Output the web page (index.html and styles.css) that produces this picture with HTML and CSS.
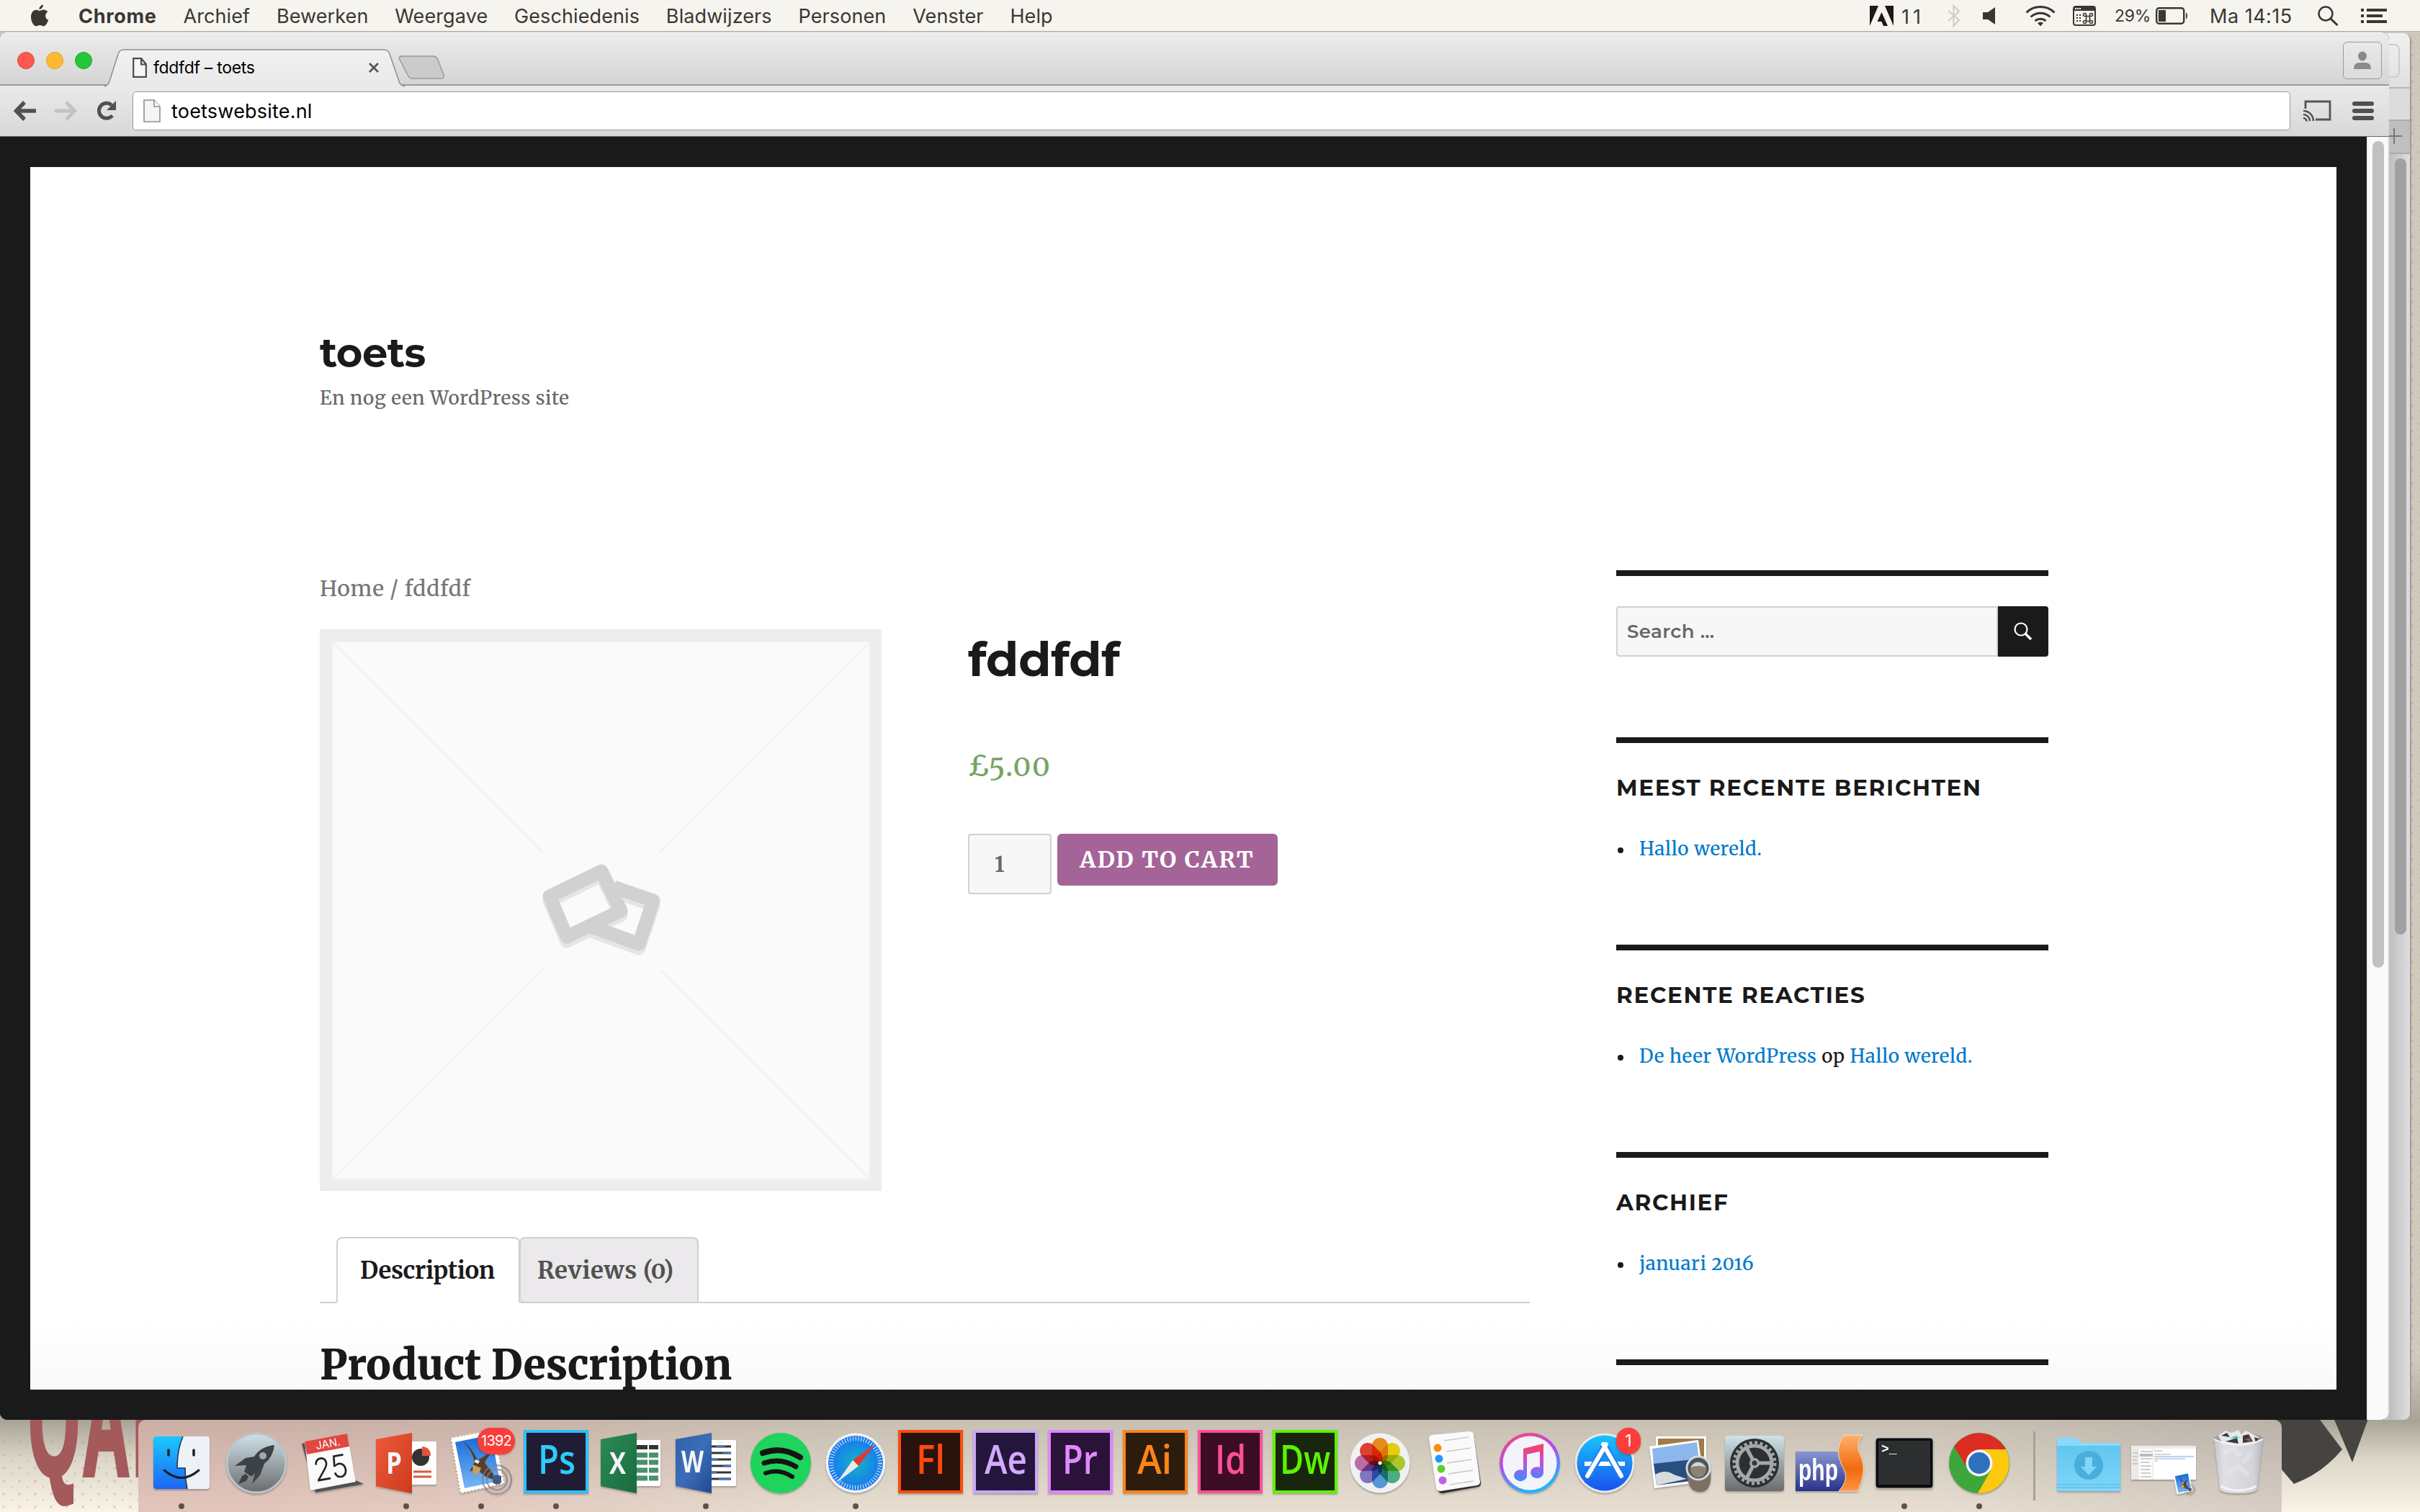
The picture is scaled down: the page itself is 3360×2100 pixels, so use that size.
FILE: index.html
```html
<!DOCTYPE html>
<html lang="nl">
<head>
<meta charset="utf-8">
<title>fddfdf – toets</title>
<link rel="stylesheet" href="styles.css">
</head>
<body>
<svg class="wallpaper" viewBox="0 0 3360 2100" aria-hidden="true">
  <defs>
    <linearGradient id="paper" x1="0" y1="0" x2="0" y2="1"><stop offset="0" stop-color="#cdc8bb"/><stop offset=".9" stop-color="#d0cabc"/><stop offset=".94" stop-color="#a9a498"/><stop offset=".965" stop-color="#dcd6c8"/><stop offset="1" stop-color="#fbf4e6"/></linearGradient>
    <pattern id="grain" width="22" height="18" patternUnits="userSpaceOnUse"><circle cx="5" cy="5" r="2" fill="#a89f8c" opacity=".35"/><circle cx="16" cy="13" r="1.600" fill="#a89f8c" opacity=".3"/></pattern>
  </defs>
  <rect width="3360" height="2100" fill="url(#paper)"/>
  <rect width="200" height="2100" fill="url(#grain)"/>
  <rect x="3340" width="20" height="1980" fill="url(#grain)"/>
  <text class="poster" transform="translate(40 2048) scale(.44 1)" textLength="385">QAI</text>
  <path d="M3100 1960H3212L3252 2013Q3225 2046 3185 2061L3150 2020Z" fill="#464440"/>
  <path d="M3236 1960H3292L3266 2031Z" fill="#464440"/>
</svg>

<header class="menubar">
  <svg class="apple" viewBox="0 0 26 32"><path d="M18 .5c.2 3-2.6 6.600-5.500 6.500C12.200 4 15 .8 18 .5zM13 9c1.300 0 3-1.600 5.800-1.500 2.200.1 4.200 1.200 5.400 3-4.600 3-3.700 9.400 1 11.300-1 3-3.700 8.500-6.700 8.600-2 0-2.800-1.300-5.200-1.300s-3.300 1.300-5.200 1.300C4.300 30.300 1 23.500 1 17.600 1 11.500 4.600 7.800 8 7.800c2.200 0 3.800 1.200 5 1.200z" fill="#3a3733"/></svg>
  <nav class="menus">
    <b>Chrome</b><span>Archief</span><span>Bewerken</span><span>Weergave</span><span>Geschiedenis</span><span>Bladwijzers</span><span>Personen</span><span>Venster</span><span>Help</span>
  </nav>
  <div class="status">
    <svg class="s-adobe" viewBox="0 0 33 28"><path d="M0 0h12L0 28zM21 0h12v28zM16.500 9l8.500 19h-6l-2.500-6h-6z" fill="#1c1a17"/></svg>
    <span class="s-eleven">11</span>
    <svg class="s-bt" viewBox="0 0 20 32"><path d="M2 9l15 13-7.500 8V2L17 10 2 23" fill="none" stroke="#cfccc6" stroke-width="2"/></svg>
    <svg class="s-vol" viewBox="0 0 18 24"><path d="M0 7h7l10-7v24L7 17H0z" fill="#3a3733"/></svg>
    <svg class="s-wifi" viewBox="0 0 42 30"><g fill="none" stroke="#3a3733" stroke-width="3"><path d="M1.500 10.500a28 28 0 0 1 39 0"/><path d="M7.500 16.500a20 20 0 0 1 27 0"/><path d="M13.500 22a12 12 0 0 1 15 0"/></g><path d="M17 25q4-3 8 0l-4 4.500z" fill="#3a3733"/></svg>
    <svg class="s-cal" viewBox="0 0 32 28"><rect x="1" y="1" width="30" height="26" rx="3" fill="none" stroke="#3a3733" stroke-width="2"/><path d="M1 2h30v5H1z" fill="#3a3733"/><path d="M3 4h8" stroke="#fff" stroke-width="2" stroke-dasharray="2 1"/><path d="M5 13h7M5 17h7M5 21h7" stroke="#3a3733" stroke-width="2" stroke-dasharray="2"/><path d="M18.500 14.500v7h5v-7zM18.500 14.500h-2a2 2 0 1 1 2-2zM23.500 14.500h2a2 2 0 1 0-2-2zM18.500 21.500v1a2 2 0 1 1-2-2h2M23.500 21.500v1a2 2 0 1 0 2-2h-2" fill="none" stroke="#3a3733" stroke-width="1.600"/></svg>
    <span class="s-pct">29%</span>
    <svg class="s-bat" viewBox="0 0 46 24"><rect x="1.200" y="1.200" width="38" height="21.600" rx="3.500" fill="none" stroke="#3a3733" stroke-width="2.400"/><rect x="4" y="4" width="10" height="16" fill="#3a3733"/><path d="M42 7q4 5 0 10z" fill="#3a3733"/></svg>
    <span class="s-time">Ma 14:15</span>
    <svg class="s-find" viewBox="0 0 30 28"><circle cx="11" cy="11" r="9.500" fill="none" stroke="#3a3733" stroke-width="2.500"/><path d="M18 18l9.500 9" stroke="#3a3733" stroke-width="3"/></svg>
    <svg class="s-list" viewBox="0 0 36 20"><path d="M0 2h4M8 2h28M0 10h4M8 10h22M0 18h4M8 18h28" stroke="#3a3733" stroke-width="4"/></svg>
  </div>
</header>

<section class="back-window" aria-hidden="true">
  <div class="bw-title"><i></i></div>
  <div class="bw-bar"></div>
  <div class="bw-tabs"><svg viewBox="0 0 22 22"><path d="M11 0v22M0 11h22" stroke="#777" stroke-width="2"/></svg></div>
  <div class="bw-scroll"><i></i></div>
</section>

<main class="window">
  <div class="tabstrip">
    <div class="lights"><i class="red"></i><i class="amber"></i><i class="green"></i></div>
    <div class="tab">
      <svg class="tab-shape" viewBox="0 0 424 54"><defs><linearGradient id="tg" x1="0" y1="0" x2="0" y2="1"><stop offset="0" stop-color="#f1f1f1"/><stop offset="1" stop-color="#e9e9e9"/></linearGradient></defs><path d="M0 52q5-1 7-7L19 7q2-6 8-6h361q6 0 8 6l13 38q2 6 8 7v2H0z" fill="url(#tg)"/><path d="M0 52q5-1 7-7L19 7q2-6 8-6h361q6 0 8 6l13 38q2 6 8 7" fill="none" stroke="#8f8f8f" stroke-width="1.500"/></svg>
      <svg class="doc" viewBox="0 0 20 28"><path d="M1.200 1.200h11l6.600 8v17.600H1.200zM12 1.500v8h7" fill="#f5f5f5" stroke="#4c4c4c" stroke-width="2.200"/></svg>
      <span class="tab-title">fddfdf – toets</span>
      <svg class="close" viewBox="0 0 14 14"><path d="M1 1l12 12M13 1L1 13" stroke="#555" stroke-width="2.600"/></svg>
    </div>
    <svg class="newtab" viewBox="0 0 64 33"><path d="M5 1h43q5 0 7 5l8 21q1 5-4 5H20q-5 0-7-5L2 6Q0 1 5 1z" fill="#cbcbcc" stroke="#999" stroke-width="1.500"/></svg>
    <div class="profile"><svg viewBox="0 0 24 26"><ellipse cx="12" cy="7" rx="6" ry="6.500" fill="#8a8a8a"/><path d="M0 25q0-9 8-9h8q8 0 8 9z" fill="#8a8a8a"/></svg></div>
  </div>
  <div class="toolbar">
    <svg class="nav back" viewBox="0 0 32 28"><path d="M15 2L3.500 14 15 26M4 14h27" fill="none" stroke="#505050" stroke-width="5.500"/></svg>
    <svg class="nav fwd" viewBox="0 0 32 28"><path d="M17 2l11.500 12L17 26M28 14H1" fill="none" stroke="#c2c2c2" stroke-width="5"/></svg>
    <svg class="nav reload" viewBox="0 0 28 28"><path d="M22 20.500A10.500 10.500 0 1 1 21 6" fill="none" stroke="#505050" stroke-width="5"/><path d="M27 0v13H14z" fill="#505050"/></svg>
    <div class="omnibox">
      <svg viewBox="0 0 24 32"><path d="M1 1h14l8 9v21H1z" fill="#f5f5f5" stroke="#8e8e8e" stroke-width="1.600"/><path d="M15 1v9h8" fill="#fff" stroke="#8e8e8e" stroke-width="1.600"/></svg>
      <span class="url">toetswebsite.nl</span>
    </div>
    <svg class="cast" viewBox="0 0 40 30"><path d="M4 12V2h34v25H18" fill="none" stroke="#555" stroke-width="2.800"/><path d="M1 15a14 14 0 0 1 14 14M1 20a9 9 0 0 1 9 9M1 25a4.500 4.500 0 0 1 4.500 4.500" fill="none" stroke="#555" stroke-width="2.600"/></svg>
    <div class="burger"><i></i><i></i><i></i></div>
  </div>
  <div class="viewport">
    <div class="site">
      <h1 class="site-title">toets</h1>
      <p class="tagline">En nog een WordPress site</p>
      <div class="columns">
        <div class="primary">
          <p class="crumbs">Home / fddfdf</p>
          <div class="product">
            <svg class="placeholder" viewBox="0 0 780 780"><rect width="780" height="780" fill="#ededed"/><rect x="17.500" y="17.500" width="746" height="746" fill="#fafafa" stroke="#f3f3f3" stroke-width="1.500"/><path d="M18 18L310 310M763 18L472 310M18 763L310 472M763 763L474 474" stroke="#f1f1f1" stroke-width="2"/>
              <g fill="none" stroke-linejoin="round" stroke-width="19"><path d="M408 358l55 19-20 60-66-24M391 336l-72 35 24 56 75-36z" transform="translate(0 6)" stroke="#e5e5e5"/><path d="M408 358l55 19-20 60-66-24" stroke="#d1d1d1"/><path d="M391 336l-72 35 24 56 75-36z" stroke="#d1d1d1"/></g></svg>
            <div class="summary">
              <h2 class="product-title">fddfdf</h2>
              <p class="price">£5.00</p>
              <div class="cart"><div class="qty">1</div><div class="add">ADD TO CART</div></div>
            </div>
          </div>
          <div class="tabs"><div class="t active">Description</div><div class="t">Reviews (0)</div></div>
          <h2 class="desc">Product Description</h2>
        </div>
        <aside class="sidebar">
          <section class="widget first"><div class="search"><div class="field">Search …</div><div class="go"><svg viewBox="0 0 26 26"><circle cx="10" cy="10" r="8.500" fill="none" stroke="#fff" stroke-width="2.200"/><path d="M16 16l8 8" stroke="#fff" stroke-width="3.500"/></svg></div></div></section>
          <section class="widget"><h3>MEEST RECENTE BERICHTEN</h3><p class="li"><a>Hallo wereld.</a></p></section>
          <section class="widget"><h3>RECENTE REACTIES</h3><p class="li"><a>De heer WordPress</a> op <a>Hallo wereld.</a></p></section>
          <section class="widget"><h3>ARCHIEF</h3><p class="li"><a>januari 2016</a></p></section>
          <section class="widget"></section>
        </aside>
      </div>
    </div>
    <div class="scrollbar"><i></i></div>
  </div>
</main>

<footer class="dock">
  <svg class="defs" width="0" height="0"><defs>
    <linearGradient id="gFinder" x1="0" y1="0" x2="0" y2="1"><stop offset="0" stop-color="#1bc8ff"/><stop offset="1" stop-color="#1b66f2"/></linearGradient>
    <linearGradient id="gSilver" x1="0" y1="0" x2="0" y2="1"><stop offset="0" stop-color="#cfe2ea"/><stop offset="1" stop-color="#6b6b6b"/></linearGradient>
    <linearGradient id="gSky" x1="0" y1="0" x2="0" y2="1"><stop offset="0" stop-color="#1668d8"/><stop offset="1" stop-color="#78b8f6"/></linearGradient>
    <linearGradient id="gBlue" x1="0" y1="0" x2="0" y2="1"><stop offset="0" stop-color="#19c4fd"/><stop offset="1" stop-color="#1a52ee"/></linearGradient>
    <linearGradient id="gMusic" x1="0" y1="0" x2=".4" y2="1"><stop offset="0" stop-color="#ff4a5c"/><stop offset=".5" stop-color="#b44cf0"/><stop offset="1" stop-color="#1fb6ff"/></linearGradient>
    <linearGradient id="gNote" x1="0" y1="0" x2="0" y2="1"><stop offset="0" stop-color="#ff4155"/><stop offset=".5" stop-color="#c050e0"/><stop offset="1" stop-color="#3c8cff"/></linearGradient>
    <linearGradient id="gPhp" x1="0" y1="0" x2="0" y2="1"><stop offset="0" stop-color="#8a95d2"/><stop offset="1" stop-color="#28328a"/></linearGradient>
    <linearGradient id="gRibbon" x1="0" y1="0" x2="0" y2="1"><stop offset="0" stop-color="#ffb06a"/><stop offset=".6" stop-color="#f26a10"/><stop offset="1" stop-color="#ff9440"/></linearGradient>
    <linearGradient id="gFolder" x1="0" y1="0" x2="0" y2="1"><stop offset="0" stop-color="#62c6ef"/><stop offset="1" stop-color="#7fd6fb"/></linearGradient>
    <linearGradient id="gBin" x1="0" y1="0" x2="1" y2="0"><stop offset="0" stop-color="#c4c6ca"/><stop offset=".2" stop-color="#dfe0e4"/><stop offset=".8" stop-color="#d4d5da"/><stop offset="1" stop-color="#b4b6bb"/></linearGradient>
    <linearGradient id="gWord" x1="0" y1="0" x2="1" y2="1"><stop offset="0" stop-color="#2c62ab"/><stop offset=".5" stop-color="#3d6db8"/><stop offset="1" stop-color="#204a92"/></linearGradient>
    <linearGradient id="gXl" x1="0" y1="0" x2="1" y2="1"><stop offset="0" stop-color="#2c8b57"/><stop offset="1" stop-color="#1a6a3d"/></linearGradient>
    <linearGradient id="gPp" x1="0" y1="0" x2="1" y2="1"><stop offset="0" stop-color="#ee5a3a"/><stop offset="1" stop-color="#cd3a1c"/></linearGradient>
    <radialGradient id="gCompass"><stop offset="0" stop-color="#12b5c8"/><stop offset="1" stop-color="#1a74f0"/></radialGradient>
    <g id="stamp"><path d="M11 26L69 15L83 88L24 101Z" fill="#fff" stroke="#fff" stroke-width="2.500" stroke-dasharray="3 2"/><path d="M16 31l50-10 12 64-49 10z" fill="url(#gSky)"/><path d="M27 30q12 12 16 28l-7 14 9-4 12 10q8 5 14 4-1-8-10-17l-4-6 9-14-14 8-5 3Q39 38 27 30z" fill="#54402c"/><path d="M40 62l12 5-3 7-8 3z" fill="#c9a05c"/><path d="M44 55l6 2-2 4-5-2z" fill="#f3eee4"/><g fill="none" stroke="#7c8088" stroke-width="2" opacity=".75"><circle cx="74" cy="83" r="20"/><circle cx="74" cy="83" r="14"/></g><path d="M68 78q6-3 12 0v9q-6 6-12 0z" fill="#405a80"/></g>
  </defs></svg>

  <div class="app on"><svg viewBox="0 0 104 128"><rect x="13" y="23" width="78" height="73" rx="4" fill="#eef1f6"/><path d="M54 23H17q-4 0-4 4v65q0 4 4 4h43q-3-14-3-29H46q0-26 8-44z" fill="url(#gFinder)"/><path d="M54 23Q46 41 46 67h11q0 15 3 29" fill="none" stroke="#1c3350" stroke-width="1.500"/><path d="M34 42v7M69 42v7" stroke="#16202c" stroke-width="3.500" stroke-linecap="round"/><path d="M28 70Q52 91 76 70" fill="none" stroke="#16202c" stroke-width="3" stroke-linecap="round"/></svg></div>
  <div class="app"><svg viewBox="0 0 104 128"><circle cx="52" cy="60" r="41" fill="url(#gSilver)" stroke="#b9c6cc" stroke-width="3"/><path d="M77 35Q58 37 49 51L37 53 22 64 38 63 35 72 45 79 50 74 46 89 57 77 63 61Q75 52 77 35Z" fill="#3d4246"/><path d="M37 75l-5 3-5 11 11-4 3-6z" fill="#3d4246"/><circle cx="61" cy="50" r="5" fill="#9eaab0"/></svg></div>
  <div class="app"><svg viewBox="0 0 104 128"><path d="M11 33l8-1 9 62 56-11 13 6-67 12z" fill="#4c5358"/><path d="M15 30L74 19L86 86L23 98Z" fill="#fafafa"/><path d="M15 30L74 19L77 37L18 48Z" fill="#e04743"/><g transform="rotate(-10 52 60)"><text class="cal-m" x="52" y="38" text-anchor="middle">JAN.</text><text class="cal-d" x="50" y="82" text-anchor="middle" textLength="48" lengthAdjust="spacingAndGlyphs">25</text></g></svg></div>
  <div class="app on"><svg viewBox="0 0 104 128"><rect x="54" y="30" width="40" height="60" rx="2" fill="#fff"/><circle cx="72" cy="52" r="12" fill="#333"/><path d="M74 50V37q12 1 12 13z" fill="#e0563a"/><path d="M62 72h25M62 79h25" stroke="#d9583c" stroke-width="3"/><path d="M10 27L60 18v84L10 92z" fill="url(#gPp)"/><text class="office" x="24" y="75" textLength="22" lengthAdjust="spacingAndGlyphs">P</text></svg></div>
  <div class="app on"><svg viewBox="0 0 104 128"><use href="#stamp"/></svg><b class="badge wide">1392</b></div>
  <div class="app on"><svg viewBox="0 0 104 128"><rect x="9" y="16" width="86" height="84" fill="#211c35" stroke="#27c2fb" stroke-width="4"/><text class="cc" x="27" y="75" textLength="52" lengthAdjust="spacingAndGlyphs" fill="#2bcdf9">Ps</text></svg></div>
  <div class="app"><svg viewBox="0 0 104 128"><rect x="54" y="28" width="39" height="64" rx="2" fill="#fff"/><path d="M59 38h31" stroke="#333" stroke-width="6"/><path d="M59 49h31M59 59h31M59 70h31M59 81h31" stroke="#4b8f6c" stroke-width="7"/><path d="M76 34v52" stroke="#fff" stroke-width="2"/><path d="M10 27L60 18v84L10 92z" fill="url(#gXl)"/><text class="office" x="22" y="75" textLength="23" lengthAdjust="spacingAndGlyphs">X</text></svg></div>
  <div class="app on"><svg viewBox="0 0 104 128"><rect x="54" y="28" width="40" height="64" rx="2" fill="#fff"/><path d="M59 37h28M59 46h28M59 55h28M59 64h28M59 73h28M59 82h28" stroke="#333" stroke-width="3"/><path d="M66 37h12M76 46h11M59 55h10M76 64h11M59 73h8M70 82h17" stroke="#4a72b8" stroke-width="3"/><path d="M10 27L60 18v84L10 92z" fill="url(#gWord)"/><text class="office" x="18" y="73" textLength="31" lengthAdjust="spacingAndGlyphs">W</text></svg></div>
  <div class="app"><svg viewBox="0 0 104 128"><circle cx="52" cy="60" r="42" fill="#1fd35c"/><g fill="none" stroke="#141414" stroke-linecap="round"><path d="M27 46Q54 36 79 52" stroke-width="8"/><path d="M29 60Q52 52 73 65" stroke-width="7"/><path d="M31 74Q50 67 68 79" stroke-width="6"/></g></svg></div>
  <div class="app on"><svg viewBox="0 0 104 128"><circle cx="52" cy="60" r="41.500" fill="#f2f3f5"/><circle cx="52" cy="60" r="38" fill="url(#gCompass)"/><circle cx="52" cy="60" r="34" fill="none" stroke="#d8eefc" stroke-width="6" stroke-dasharray="1.300 2.500" opacity=".85"/><path d="M79 34L48 56l8 8z" fill="#e8352e"/><path d="M26 87L48 56l8 8z" fill="#eceae6"/></svg></div>
  <div class="app"><svg viewBox="0 0 104 128"><rect x="9" y="16" width="86" height="84" fill="#2a120d" stroke="#ff4b0a" stroke-width="4"/><text class="cc" x="32" y="75" textLength="40" lengthAdjust="spacingAndGlyphs" fill="#ff4a10">Fl</text></svg></div>
  <div class="app"><svg viewBox="0 0 104 128"><rect x="9" y="16" width="86" height="84" fill="#24153d" stroke="#cba6f7" stroke-width="4"/><text class="cc" x="23" y="75" textLength="59" lengthAdjust="spacingAndGlyphs" fill="#d2a9fb">Ae</text></svg></div>
  <div class="app"><svg viewBox="0 0 104 128"><rect x="9" y="16" width="86" height="84" fill="#2a1238" stroke="#de86ff" stroke-width="4"/><text class="cc" x="27" y="75" textLength="49" lengthAdjust="spacingAndGlyphs" fill="#e388ff">Pr</text></svg></div>
  <div class="app"><svg viewBox="0 0 104 128"><rect x="9" y="16" width="86" height="84" fill="#2c1c0e" stroke="#ff8418" stroke-width="4"/><text class="cc" x="27" y="75" textLength="48" lengthAdjust="spacingAndGlyphs" fill="#ff8418">Ai</text></svg></div>
  <div class="app"><svg viewBox="0 0 104 128"><rect x="9" y="16" width="86" height="84" fill="#3a0d22" stroke="#ff4f98" stroke-width="4"/><text class="cc" x="31" y="75" textLength="43" lengthAdjust="spacingAndGlyphs" fill="#ff4f98">Id</text></svg></div>
  <div class="app"><svg viewBox="0 0 104 128"><rect x="9" y="16" width="86" height="84" fill="#17260c" stroke="#5df203" stroke-width="4"/><text class="cc" x="17" y="75" textLength="70" lengthAdjust="spacingAndGlyphs" fill="#5df203">Dw</text></svg></div>
  <div class="app"><svg class="photos" viewBox="0 0 104 128"><circle cx="52" cy="60" r="41.500" fill="#eff1f3"/><g><rect x="41" y="25" width="22" height="35" rx="11" fill="#f7941d"/><rect x="41" y="25" width="22" height="35" rx="11" fill="#f2d90c" transform="rotate(45 52 60)"/><rect x="41" y="25" width="22" height="35" rx="11" fill="#b3d334" transform="rotate(90 52 60)"/><rect x="41" y="25" width="22" height="35" rx="11" fill="#4fb783" transform="rotate(135 52 60)"/><rect x="41" y="25" width="22" height="35" rx="11" fill="#5a9fdf" transform="rotate(180 52 60)"/><rect x="41" y="25" width="22" height="35" rx="11" fill="#8a7cc4" transform="rotate(225 52 60)"/><rect x="41" y="25" width="22" height="35" rx="11" fill="#c973ae" transform="rotate(270 52 60)"/><rect x="41" y="25" width="22" height="35" rx="11" fill="#ee4234" transform="rotate(315 52 60)"/></g><circle cx="52" cy="60" r="2.500" fill="#fff"/></svg></div>
  <div class="app"><svg viewBox="0 0 104 128"><path d="M18 28q0-4 4-5l50-6q5 0 6 4l10 67q0 4-4 5l-49 9q-5 0-6-4z" fill="#2c2c2e"/><path d="M16 26q0-4 4-5l52-5q5 0 6 4l9 66q0 4-4 5l-51 8q-5 0-6-4z" fill="#fafafa"/><circle cx="28" cy="39" r="5.500" fill="#ff8a14"/><circle cx="30" cy="54" r="5.500" fill="#1f9cf5"/><circle cx="33" cy="68" r="5.500" fill="#55d22f"/><circle cx="35" cy="84" r="5.500" fill="#c361dc"/><path d="M37 29l34-5M40 44l34-5M41 60l34-5M43 75l34-5M45 90l33-5" stroke="#c6c6c6" stroke-width="1.300"/></svg></div>
  <div class="app"><svg viewBox="0 0 104 128"><circle cx="52" cy="60" r="42" fill="url(#gMusic)"/><circle cx="52" cy="60" r="37.500" fill="#f3f4fb"/><path d="M43 40l28-7v39a9 8 0 1 1-5-6V44l-18 4v28a9 8 0 1 1-5-6z" fill="url(#gNote)"/></svg></div>
  <div class="app"><svg viewBox="0 0 104 128"><circle cx="52" cy="60" r="41.500" fill="#e8e9eb"/><circle cx="52" cy="60" r="38.500" fill="url(#gBlue)"/><path d="M24 61h56" stroke="#fff" stroke-width="6"/><path d="M54 34L30 77M50 34l24 42" stroke="#1c7ff2" stroke-width="10"/><path d="M54 34L28 78M50 34l25 44" stroke="#fff" stroke-width="6" stroke-linecap="round"/></svg><b class="badge">1</b></div>
  <div class="app"><svg viewBox="0 0 104 128"><rect x="19" y="23" width="70" height="60" fill="#fff"/><rect x="22" y="26" width="64" height="56" fill="#a07c44"/><path d="M10 37L78 28L86 86L17 95Z" fill="#fff"/><path d="M14 40L76 31L79 56L16 64Z" fill="#8db7ec"/><path d="M16 61L79 54L83 83L20 91Z" fill="#284f80"/><path d="M18 76q14-8 26 0 12 4 18 6l-42 9z" fill="#d8dcdc"/><path d="M62 70q0 30 18 30t15-30z" fill="#7b7062"/><circle cx="78" cy="67" r="16" fill="#4d5459" stroke="#d5d9db" stroke-width="3"/><circle cx="78" cy="69" r="11" fill="#8d8171"/><path d="M67 66q10-14 22 0-11-4-22 0z" fill="#c7dbea"/></svg></div>
  <div class="app"><svg viewBox="0 0 104 128"><rect x="11" y="22" width="82" height="77" rx="4" fill="url(#gSilver)"/><circle cx="52" cy="60" r="34" fill="#2c3033"/><circle cx="52" cy="60" r="24" fill="none" stroke="#a3a8ab" stroke-width="5"/><circle cx="52" cy="60" r="28.500" fill="none" stroke="#a3a8ab" stroke-width="4" stroke-dasharray="4 3.460"/><path d="M55 60H75M52 60L41 39M52 60L41 81" stroke="#a3a8ab" stroke-width="5"/><circle cx="52" cy="60" r="7" fill="#a3a8ab"/><circle cx="52" cy="60" r="3.500" fill="#33373a"/></svg></div>
  <div class="app"><svg viewBox="0 0 104 128"><rect x="5" y="44" width="72" height="55" fill="url(#gPhp)"/><path d="M73 21h25q-10 13-4 25 7 14 5 28-2 14-8 25H65q12-13 9-25-2-6-6-14-5-12-3-22 2-11 8-17z" fill="url(#gRibbon)" stroke="#f2e3d6" stroke-width="1"/><text class="php" x="9" y="84" textLength="55" lengthAdjust="spacingAndGlyphs">php</text></svg></div>
  <div class="app on"><svg viewBox="0 0 104 128"><rect x="12" y="25" width="80" height="70" rx="4" fill="#0b0b0b" stroke="#b7c8ca" stroke-width="1"/><rect x="16" y="29" width="72" height="61" fill="#2d2e2f"/><text class="term" x="20" y="46">&gt;_</text></svg></div>
  <div class="app on"><svg viewBox="0 0 104 128"><circle cx="52" cy="60" r="42" fill="#3fa63c"/><path d="M52 60L17 37A42 42 0 0 1 89 41H52z" fill="#dd2c24"/><path d="M17 37L36 68l10-8 6-19z" fill="#dd2c24"/><path d="M52 41H89A42 42 0 0 1 50 102L68 70z" fill="#fdc90f"/><circle cx="52" cy="60" r="18.500" fill="#f4f6f7"/><circle cx="52" cy="60" r="15" fill="#2f71bb"/></svg></div>
  <div class="sep"></div>
  <div class="app"><svg viewBox="0 0 104 128"><path d="M8 28q0-3 3-3h22q3 0 5 3l2 4h53q3 0 3 3v61q0 3-3 3H11q-3 0-3-3z" fill="#86dafb"/><rect x="8" y="36" width="88" height="63" rx="2" fill="url(#gFolder)"/><path d="M8 90h88M8 94h88" stroke="#52b6df" stroke-width="1"/><circle cx="52" cy="63" r="20" fill="#4aaedb"/><path d="M47 52h10v13h6L52 77 41 65h6z" fill="#7fd6fb"/></svg></div>
  <div class="app"><svg viewBox="0 0 104 128"><rect x="7" y="36" width="90" height="47" fill="#fff"/><rect x="7" y="36" width="90" height="4" fill="#ececec"/><rect x="7" y="40" width="11" height="43" fill="#e9e9e9"/><path d="M20 44h16M20 54h16M20 59h13M20 64h15M20 69h13M20 74h14M20 79h15M9 46h7M9 51h7M9 56h6M9 61h7" stroke="#bdbdbd" stroke-width="1.500"/><rect x="19" y="47" width="18" height="4" fill="#bbb"/><path d="M37 40v43" stroke="#ddd"/><path d="M39 43h12M39 48h22M39 54h30M39 57h5" stroke="#aaa" stroke-width="1"/><path d="M39 51h55M50 54h32" stroke="#bcd2f5" stroke-width="2"/><use href="#stamp" transform="translate(62 67) scale(.36)"/></svg></div>
  <div class="app"><svg viewBox="0 0 104 128"><path d="M18 26q34-9 68 0l-8 70q-2 6-26 6t-26-6z" fill="url(#gBin)"/><ellipse cx="52" cy="26" rx="34" ry="8" fill="#9b9da1"/><path d="M24 22l10-7 8 3 10-4 4 6 6-5 10 5 8 4-4 8-20 3-26-2z" fill="#e8e8e8"/><path d="M28 22l8-4 4 6zM34 30l16-5 2 8zM58 22l8-2 6 10-14 2zM74 24l6 2-4 6z" fill="#3a3a3a"/><path d="M40 26l8-4 6 3z" fill="#3cc7c0"/><path d="M60 27l8-2 2 6z" fill="#a35a3a"/><path d="M18 27q34 16 68 0" fill="none" stroke="#f2f3f5" stroke-width="2"/><path d="M32 45l14-6 8 12M58 60l12-14M36 75l16-10 14 12" fill="none" stroke="#eaeaee" stroke-width="6" opacity=".45"/><path d="M27 92q25 12 50 0" fill="none" stroke="#f3f4f6" stroke-width="3"/></svg></div>
</footer>
</body>
</html>
```
FILE: styles.css
```css
* { box-sizing: border-box; margin: 0; padding: 0; }
body { position: relative; width: 3360px; height: 2100px; overflow: hidden; font-family: Inter, "Liberation Sans", sans-serif; color: #1a1a1a; background: #d2cbbc; }
svg { display: block; flex: none; }
i { display: block; font-style: normal; }
.wallpaper { position: absolute; left: 0; top: 0; width: 3360px; height: 2100px; }
.poster { font: bold 205px "Liberation Sans", sans-serif; fill: #a4595a; stroke: #a4595a; stroke-width: 8px; }

/* menu bar */
.menubar { position: relative; height: 44px; display: flex; align-items: center; padding-left: 42px; background: #f6f4ef; color: #3a3733; font-size: 27px; line-height: 44px; white-space: nowrap; border-bottom: 1px solid #b5b1a8; }
.apple { width: 26px; height: 32px; }
.menus { display: flex; gap: 36.8px; margin-left: 41px; padding-top: 2px; flex: 1; letter-spacing: .1px; }
.menus b { letter-spacing: .7px; }
.status { display: flex; align-items: center; width: 764px; }
.s-adobe { width: 33px; height: 28px; }
.s-eleven { margin-left: 11px; padding-top: 4px; width: 63px; letter-spacing: 5px; }
.s-bt { width: 20px; height: 32px; margin-right: 30px; }
.s-vol { width: 18px; height: 24px; margin-right: 41px; }
.s-wifi { width: 42px; height: 30px; margin-right: 24px; }
.s-cal { width: 32px; height: 28px; margin-right: 26px; }
.s-pct { width: 57px; font-size: 23px; letter-spacing: -.3px; }
.s-bat { width: 46px; height: 24px; margin-right: 29px; }
.s-time { width: 150px; padding-top: 2px; letter-spacing: .5px; }
.s-find { width: 30px; height: 28px; margin-right: 30px; }
.s-list { width: 36px; height: 20px; }

/* browser window */
.window { position: absolute; left: 0; top: 45px; width: 3317px; height: 1927px; border-radius: 8px 10px 10px 10px; overflow: hidden; background: #1a1a1a; display: flex; flex-direction: column; }
.tabstrip { position: relative; height: 74px; flex: none; display: flex; align-items: flex-start; background: linear-gradient(#ececec, #d5d5d5); border-bottom: 2px solid #999; border-top: 1px solid #f8f8f8; }
.lights { display: flex; gap: 16px; margin: 26px 0 0 24px; }
.lights i { width: 24px; height: 24px; border-radius: 50%; }
.red { background: #fe5850; border: 1px solid #e2453e; }
.amber { background: #ffb92f; border: 1px solid #dfa023; }
.green { background: #25c63a; border: 1px solid #1bab29; }
.tab { position: relative; width: 424px; height: 50px; margin: 23px 0 0 17px; display: flex; align-items: center; z-index: 1; }
.tab-shape { position: absolute; left: 0; top: -1px; width: 424px; height: 54px; }
.doc { position: relative; width: 20px; height: 28px; margin-left: 39px; }
.tab-title { position: relative; margin-left: 9px; font-size: 23px; letter-spacing: -.3px; color: #000; width: 299px; }
.close { position: relative; width: 14px; height: 14px; }
.newtab { width: 64px; height: 33px; margin: 31px 0 0 -16px; }
.profile { margin: 12px 10px 0 auto; width: 54px; height: 52px; border: 1.500px solid #999; border-radius: 6px; display: flex; justify-content: center; align-items: center; background: linear-gradient(#e9e9e9, #dcdcdc); }
.profile svg { width: 24px; height: 26px; }
.toolbar { height: 71px; flex: none; display: flex; align-items: center; background: linear-gradient(#eaeaea, #d8d8d8); border-bottom: 1px solid #666; padding: 0 20px 1px 19px; }
.nav { width: 32px; height: 28px; }
.fwd { margin-left: 24px; }
.reload { width: 28px; margin-left: 27px; }
.omnibox { margin-left: 22px; width: 2996px; height: 54px; border: 1.500px solid #999; border-radius: 5px; background: #fff; display: flex; align-items: center; padding-left: 14px; }
.omnibox svg { width: 24px; height: 32px; }
.url { margin-left: 15px; padding-top: 1px; font-size: 27px; letter-spacing: .2px; color: #000; }
.cast { width: 40px; height: 30px; margin-left: 17px; }
.burger { display: flex; flex-direction: column; gap: 4px; margin-left: 29px; }
.burger i { width: 30px; height: 6px; border-radius: 3px; background: #4f4f4f; }

/* web page */
.viewport { flex: 1; display: flex; padding: 42px 0 42px 42px; background: #1a1a1a; }
.site { width: 3202px; height: 1698px; overflow: hidden; background: linear-gradient(#fff 0 1600px, #f9f9f9); padding: 222px 400px 0 402px; font-family: Merriweather, "Noto Serif", "DejaVu Serif", serif; font-variant-numeric: oldstyle-nums; white-space: nowrap; }
.scrollbar { width: 31px; margin: -42px 0 -42px 42px; background: #fafafa; border-left: 2px solid #ececec; border-right: 2px solid #e8e8e8; padding: 6px 0 0 6px; }
.scrollbar i { width: 16px; height: 1148px; border-radius: 8px; background: #c1c1c1; }
.site-title, .product-title, .widget h3, .field { font-family: Montserrat, Inter, sans-serif; font-weight: 700; }
.site-title { font-size: 56px; line-height: 72px; letter-spacing: -.6px; }
.tagline { margin-top: 9px; font-size: 26px; line-height: 36px; letter-spacing: .68px; color: #686868; font-weight: 500; }
.columns { display: flex; gap: 120px; margin-top: 221px; }
.primary { width: 1680px; }
.crumbs { font-size: 30px; line-height: 50px; letter-spacing: .7px; color: #777; font-weight: 500; }
.product { display: flex; gap: 120px; margin-top: 32px; }
.placeholder { width: 780px; height: 780px; }
.product-title { margin-top: 2px; font-size: 66px; line-height: 80px; letter-spacing: -.4px; }
.price { margin-top: 78px; font-size: 40px; line-height: 60px; letter-spacing: 1.280px; color: #77a464; font-weight: 500; }
.cart { display: flex; align-items: flex-start; gap: 8px; margin-top: 64px; }
.qty { width: 116px; height: 84px; border: 2px solid #d1d1d1; border-radius: 4px; background: #f7f7f7; color: #686868; font-weight: 700; font-size: 29px; line-height: 82px; padding-left: 35px; font-variant-numeric: lining-nums; }
.add { width: 306px; height: 72px; border-radius: 6px; background: #a46497; color: #fff; font-weight: 700; font-size: 32px; line-height: 72px; padding-left: 31px; letter-spacing: 1.900px; }
.tabs { display: flex; height: 92px; margin-top: 64px; border-bottom: 2px solid #d3ced2; padding-left: 23px; }
.t { height: 92px; border: 2px solid #d3ced2; border-radius: 8px 8px 0 8px; background: #ebe9eb; color: #515151; font-weight: 700; font-size: 33px; line-height: 90px; padding-left: 23px; width: 249px; margin-left: -1px; letter-spacing: .46px; }
.t.active { width: 255px; margin-left: 0; padding-left: 31px; background: #fff; border-bottom-color: #fff; border-radius: 8px 8px 0 0; color: #1a1a1a; letter-spacing: -.4px; }
.desc { margin-top: 51px; font-size: 57px; line-height: 70px; font-weight: 900; letter-spacing: -.15px; }
.sidebar { width: 600px; }
.widget { height: 288px; border-top: 8px solid #1a1a1a; padding-top: 42px; }
.widget.first { height: 232px; }
.search { display: flex; height: 70px; }
.field { width: 530px; border: 2px solid #d1d1d1; border-radius: 4px 0 0 4px; background: #f7f7f7; color: #686868; font-weight: 600; font-size: 26px; line-height: 66px; letter-spacing: .45px; padding-left: 13px; }
.go { width: 70px; background: #1a1a1a; border-radius: 0 4px 4px 0; display: flex; align-items: center; justify-content: center; }
.go svg { width: 26px; height: 26px; }
.widget h3 { font-size: 31px; line-height: 40px; letter-spacing: 1.680px; }
.li { position: relative; margin-top: 43px; padding-left: 32px; font-size: 26px; line-height: 44px; letter-spacing: .58px; font-weight: 500; }
.li::before { content: ""; position: absolute; left: 2px; top: 20px; width: 8px; height: 8px; border-radius: 50%; background: #1a1a1a; }
.li a { color: #007acc; }

/* window behind */
.back-window { position: absolute; left: 3200px; top: 46px; width: 148px; height: 1926px; border-radius: 10px; overflow: hidden; background: #ccc; border-right: 2px solid #9f9c94; display: flex; flex-direction: column; align-items: flex-end; }
.bw-title { width: 148px; height: 77px; background: linear-gradient(#f0f0f0, #e0e0e0); border-bottom: 2px solid #b4b4b4; padding: 15px 14px 0 0; }
.bw-title i { height: 47px; border: 2px solid #ccc; border-radius: 8px; }
.bw-bar { width: 148px; height: 45px; background: #dcdcdc; border-bottom: 2px solid #acacac; }
.bw-tabs { width: 148px; height: 46px; background: #bfbfbf; border-bottom: 2px solid #acacac; padding: 10px 11px 0 0; display: flex; justify-content: flex-end; }
.bw-tabs svg { width: 22px; height: 22px; }
.bw-scroll { width: 30px; flex: 1; background: linear-gradient(90deg, #bdbdbd, #dedede); padding: 6px 0 0 9px; }
.bw-scroll i { width: 16px; height: 1078px; border-radius: 8px; background: #a0a0a0; }

/* dock */
.dock { position: absolute; left: 192px; bottom: 0; width: 2976px; height: 128px; padding: 0 8px; display: flex; border-radius: 10px 10px 0 0; background: linear-gradient(90deg, rgba(214,130,130,.28), rgba(214,130,130,.2) 500px, transparent 1000px 2500px, rgba(120,105,120,.15)), linear-gradient(#c6bfb2, #e8dfd2); }
.defs { position: absolute; }
.app { position: relative; width: 104px; height: 128px; }
.app > svg { width: 104px; height: 128px; filter: drop-shadow(0 2px 1px rgba(0,0,0,.25)); }
.photos rect { mix-blend-mode: multiply; }
.app.on::after { content: ""; position: absolute; left: 48px; top: 116px; width: 8px; height: 8px; border-radius: 50%; background: #5c5247; }
.sep { width: 3px; height: 96px; margin: 16px 22px 0 23px; background: #a8a196; }
.badge { position: absolute; left: 68px; top: 11px; width: 34px; height: 37px; border-radius: 18px; background: #fc3d39; color: #fff; font-weight: 400; font-size: 23px; line-height: 37px; text-align: center; box-shadow: 0 1px 3px rgba(0,0,0,.3); }
.badge.wide { left: 47px; width: 52px; font-size: 20px; letter-spacing: -.8px; }
.cc { font: 600 56px "Open Sans", "Noto Sans", sans-serif; }
.office { font: bold 42px "Open Sans", sans-serif; fill: #f3f6f8; }
.cal-m { font: 15px Inter, sans-serif; fill: #fff; }
.cal-d { font: 300 44px Inter, sans-serif; fill: #222; }
.php { font: bold 42px "Liberation Sans", sans-serif; fill: #fff; }
.term { font: bold 18px "Liberation Mono", monospace; fill: #fff; }
```
